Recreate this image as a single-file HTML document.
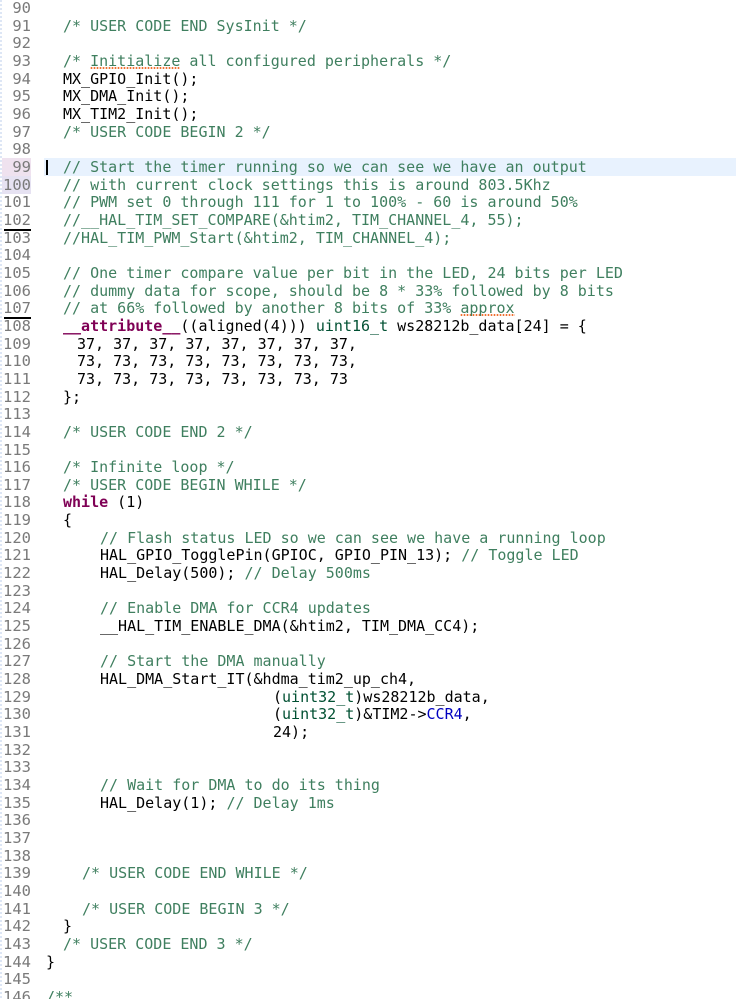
<!DOCTYPE html>
<html><head><meta charset="utf-8"><style>
html,body{margin:0;padding:0;background:#fff;width:736px;height:999px;overflow:hidden}
body{position:relative;font-family:"DejaVu Sans Mono","Liberation Mono",monospace;font-size:15px;color:#000}
.gut{position:absolute;left:0;top:0;width:2px;height:999px;background:repeating-linear-gradient(#dde6f5 0 2px,#fff 2px 4px)}
.l{position:absolute;height:17.66px;line-height:17.66px;white-space:pre}
.n{position:absolute;left:2px;width:29px;text-align:right;color:#7a7a7a;height:17.66px;line-height:17.66px;font-size:15.5px}
.c{color:#3f7f5f}.k{color:#7f0055;font-weight:bold}.t{color:#005032}.f{color:#0000c0}
.sq{background:radial-gradient(circle,#f07030 0.9px,transparent 1.1px) 0 15px/3px 2px repeat-x}
</style></head><body>
<div class="gut"></div>
<div style="position:absolute;left:44px;top:158px;width:692px;height:18px;background:#e8f2fe"></div>
<div style="position:absolute;left:2px;top:158px;width:29px;height:18px;background:#efe2ef"></div>
<div style="position:absolute;left:2px;top:176px;width:29px;height:18px;background:#e6e2f2"></div>
<div style="position:absolute;left:46px;top:160px;width:2px;height:15px;background:#000"></div>
<div style="position:absolute;left:4px;top:229px;width:27px;height:2px;background:#000"></div>
<div style="position:absolute;left:4px;top:317px;width:27px;height:2px;background:#000"></div>
<script>
var L=[
[90,0,''],
[91,63,'<span class="c">/* USER CODE END SysInit */</span>'],
[92,0,''],
[93,63,'<span class="c">/* <span class="sq">Initialize</span> all configured peripherals */</span>'],
[94,63,'MX_GPIO_Init();'],
[95,63,'MX_DMA_Init();'],
[96,63,'MX_TIM2_Init();'],
[97,63,'<span class="c">/* USER CODE BEGIN 2 */</span>'],
[98,0,''],
[99,63,'<span class="c">// Start the timer running so we can see we have an output</span>'],
[100,63,'<span class="c">// with current clock settings this is around 803.5Khz</span>'],
[101,63,'<span class="c">// PWM set 0 through 111 for 1 to 100% - 60 is around 50%</span>'],
[102,63,'<span class="c">//__HAL_TIM_SET_COMPARE(&amp;htim2, TIM_CHANNEL_4, 55);</span>'],
[103,63,'<span class="c">//HAL_TIM_PWM_Start(&amp;htim2, TIM_CHANNEL_4);</span>'],
[104,0,''],
[105,63,'<span class="c">// One timer compare value per bit in the LED, 24 bits per LED</span>'],
[106,63,'<span class="c">// dummy data for scope, should be 8 * 33% followed by 8 bits</span>'],
[107,63,'<span class="c">// at 66% followed by another 8 bits of 33% <span class="sq">approx</span></span>'],
[108,63,'<span class="k">__attribute__</span>((aligned(4))) <span class="t">uint16_t</span> ws28212b_data[24] = {'],
[109,77,'37, 37, 37, 37, 37, 37, 37, 37,'],
[110,77,'73, 73, 73, 73, 73, 73, 73, 73,'],
[111,77,'73, 73, 73, 73, 73, 73, 73, 73'],
[112,63,'};'],
[113,0,''],
[114,63,'<span class="c">/* USER CODE END 2 */</span>'],
[115,0,''],
[116,63,'<span class="c">/* Infinite loop */</span>'],
[117,63,'<span class="c">/* USER CODE BEGIN WHILE */</span>'],
[118,63,'<span class="k">while</span> (1)'],
[119,63,'{'],
[120,100,'<span class="c">// Flash status LED so we can see we have a running loop</span>'],
[121,100,'HAL_GPIO_TogglePin(GPIOC, GPIO_PIN_13); <span class="c">// Toggle LED</span>'],
[122,100,'HAL_Delay(500); <span class="c">// Delay 500ms</span>'],
[123,0,''],
[124,100,'<span class="c">// Enable DMA for CCR4 updates</span>'],
[125,100,'__HAL_TIM_ENABLE_DMA(&amp;htim2, TIM_DMA_CC4);'],
[126,0,''],
[127,100,'<span class="c">// Start the DMA manually</span>'],
[128,100,'HAL_DMA_Start_IT(&amp;hdma_tim2_up_ch4,'],
[129,273,'(<span class="t">uint32_t</span>)ws28212b_data,'],
[130,273,'(<span class="t">uint32_t</span>)&amp;TIM2-&gt;<span class="f">CCR4</span>,'],
[131,273,'24);'],
[132,0,''],[133,0,''],
[134,100,'<span class="c">// Wait for DMA to do its thing</span>'],
[135,100,'HAL_Delay(1); <span class="c">// Delay 1ms</span>'],
[136,0,''],[137,0,''],[138,0,''],
[139,82,'<span class="c">/* USER CODE END WHILE */</span>'],
[140,0,''],
[141,82,'<span class="c">/* USER CODE BEGIN 3 */</span>'],
[142,63,'}'],
[143,63,'<span class="c">/* USER CODE END 3 */</span>'],
[144,46,'}'],
[145,0,''],
[146,46,'<span class="c">/**</span>']
];
var h='';
L.forEach(function(r){var y=(0+(r[0]-90)*17.66).toFixed(2);
h+='<div class="n" style="top:'+y+'px">'+r[0]+'</div>';
if(r[2])h+='<div class="l" style="top:'+y+'px;left:'+r[1]+'px">'+r[2]+'</div>';});
document.write(h);
</script>
</body></html>
